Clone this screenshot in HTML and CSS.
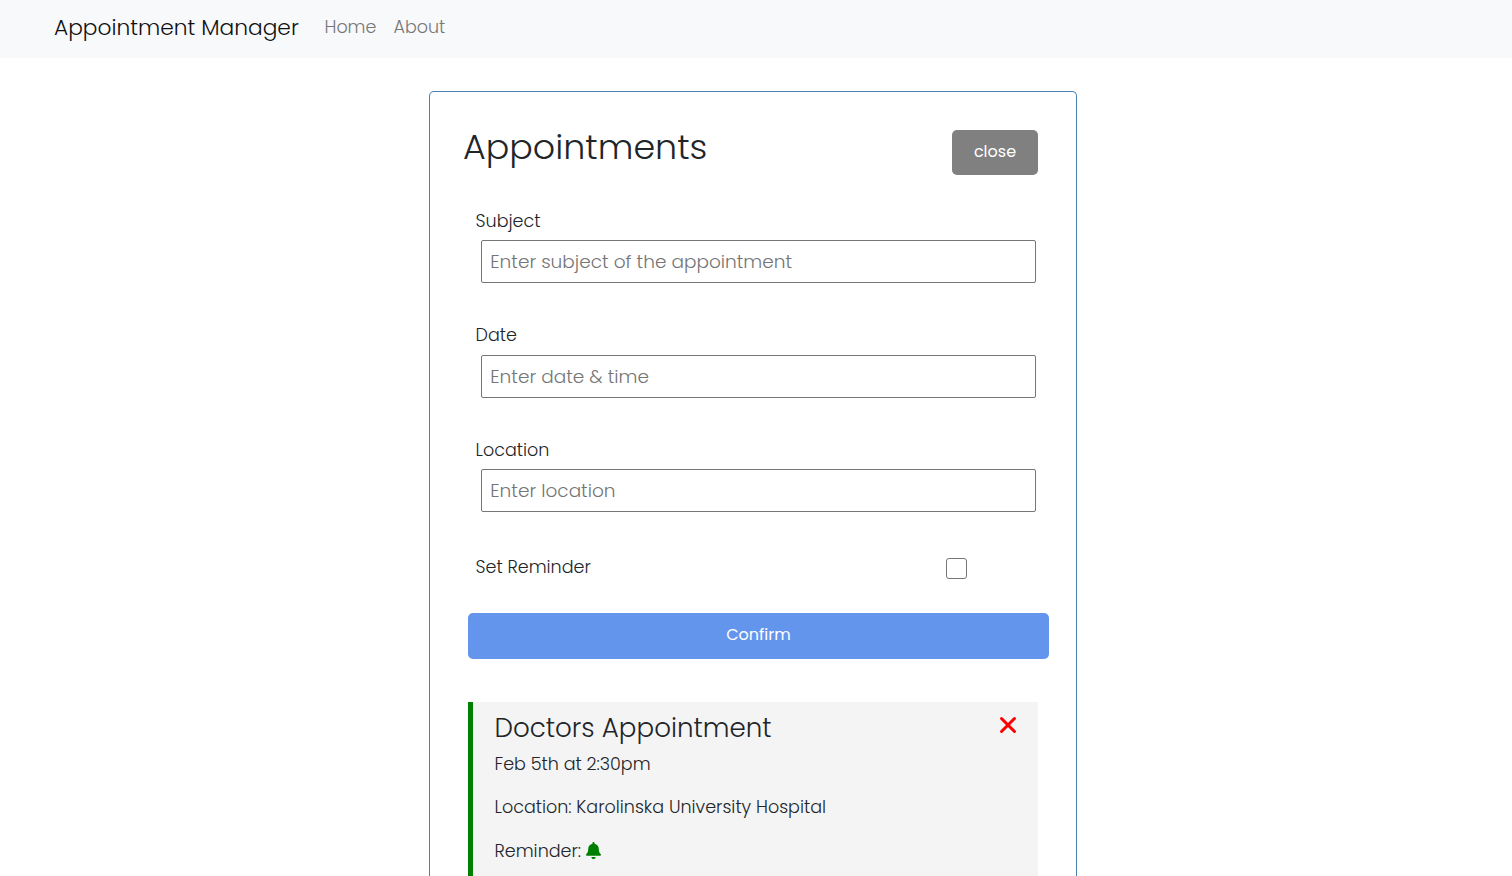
FILE: index.html
```html
<!DOCTYPE html>
<html lang="en">
<head>
<meta charset="utf-8">
<title>Appointment Manager</title>
<link rel="stylesheet" href="styles.css">
</head>
<body>
<nav class="navbar">
  <a class="brand">Appointment Manager</a>
  <a class="nav-link home">Home</a>
  <a class="nav-link about">About</a>
</nav>
<main class="container">
  <header class="header">
    <h1>Appointments</h1>
    <button class="btn btn-close">close</button>
  </header>
  <form class="add-form">
    <div class="form-control">
      <label for="subject">Subject</label>
      <input id="subject" type="text" placeholder="Enter subject of the appointment">
    </div>
    <div class="form-control">
      <label for="date">Date</label>
      <input id="date" type="text" placeholder="Enter date &amp; time">
    </div>
    <div class="form-control">
      <label for="location">Location</label>
      <input id="location" type="text" placeholder="Enter location">
    </div>
    <div class="form-check">
      <label for="reminder">Set Reminder</label>
      <input class="check" id="reminder" type="checkbox">
    </div>
    <button class="btn btn-block" type="button">Confirm</button>
  </form>
  <article class="appointment">
    <div class="title-row">
      <h3>Doctors Appointment</h3>
      <svg class="times" viewBox="0 0 18 18"><path d="M2.500 2.500 15.500 15.500M15.500 2.500 2.500 15.500"/></svg>
    </div>
    <p>Feb 5th at 2:30pm</p>
    <p>Location: Karolinska University Hospital</p>
    <p class="p-reminder"><span>Reminder:</span><svg class="bell" viewBox="0 0 448 512"><path d="M224 512c35.300 0 63.900-28.600 63.900-64H160.100c0 35.400 28.600 64 63.900 64zm215.400-149.700c-19.300-20.800-55.500-52-55.500-154.300 0-77.700-54.500-139.900-127.900-155.200V32c0-17.700-14.300-32-32-32s-32 14.300-32 32v20.800C118.600 68.100 64.100 130.300 64.100 208c0 102.300-36.200 133.500-55.500 154.300-6 6.400-8.700 14.100-8.600 21.700.1 16.400 13 32 32.100 32h383.800c19.100 0 32-15.600 32.100-32 .1-7.600-2.600-15.300-8.600-21.700z"/></svg></p>
  </article>
</main>
</body>
</html>
```
FILE: styles.css
```css
* { box-sizing: border-box; margin: 0; padding: 0; }
body {
  display: flex;
  flex-direction: column;
  height: 876px;
  overflow: hidden;
  background: #fff;
  color: #212529;
  font-family: Poppins, Inter, sans-serif;
  font-size: 17.55px;
  font-weight: 300;
  line-height: 24px;
  white-space: nowrap;
}
.navbar {
  display: flex;
  align-items: center;
  flex: none;
  height: 58px;
  padding: 0 54px 3px;
  background: #f8f9fb;
}
.brand { width: 270.5px; color: #111; font-size: 21.75px; }
.nav-link { padding-bottom: 2px; color: #777; font-size: 17.5px; }
.home { width: 69px; }
.container {
  flex: 1;
  width: 648px;
  min-height: 0;
  margin: 33px 0 0 429px;
  padding: 38px 27px 0 33px;
  overflow: hidden;
  border: 1px solid steelblue;
  border-bottom: 0;
  border-radius: 5px 5px 0 0;
}
.header { display: flex; justify-content: space-between; height: 45px; padding-right: 11px; }
h1 { font-size: 34.9px; font-weight: 300; line-height: 34px; }
.btn {
  border: 0;
  border-radius: 5px;
  color: #fff;
  font: 400 16px Poppins, Inter, sans-serif;
}
.btn-close { width: 86px; height: 45px; padding-bottom: 2px; background: gray; }
.add-form { margin: 34px 0 0 5px; }
.form-control { height: 114px; padding-left: 7px; }
.form-control:nth-child(2) { height: 115px; }
label { display: block; height: 24px; padding-left: .5px; }
.form-control input {
  display: block;
  width: 555px;
  height: 43px;
  margin: 7px 0 0 6px;
  padding: 0 8.3px 1px;
  border: 1px solid #767676;
  border-radius: 2px;
  font: 300 18.5px Poppins, Inter, sans-serif;
}
.form-control:nth-child(2) input { margin-top: 8px; }
.form-control input::placeholder { color: #757575; opacity: 1; }
.form-check { display: flex; justify-content: space-between; height: 61px; padding: 3px 82px 0 7px; }
.check {
  appearance: none;
  width: 21px;
  height: 21px;
  margin-top: 3px;
  border: 1px solid #767676;
  border-radius: 3px;
}
.btn-block { display: block; width: 581px; height: 46px; padding-bottom: 3px; background: cornflowerblue; }
.appointment {
  width: 570px;
  height: 230px;
  margin: 43px 0 0 5px;
  padding: 10px 21px 0 21.5px;
  border-left: 5px solid green;
  background: #f4f4f4;
}
.title-row { display: flex; justify-content: space-between; height: 40px; }
h3 { font-size: 26.15px; font-weight: 300; line-height: 32px; }
.times { width: 18px; height: 18px; margin-top: 4px; fill: none; stroke: red; stroke-width: 3; stroke-linecap: round; }
.appointment p { height: 24px; margin-bottom: 19px; }
.appointment .p-reminder { display: flex; margin-top: 20px; }
.bell { width: 15px; height: 17px; margin: 2.5px 0 0 5px; fill: green; }
```
